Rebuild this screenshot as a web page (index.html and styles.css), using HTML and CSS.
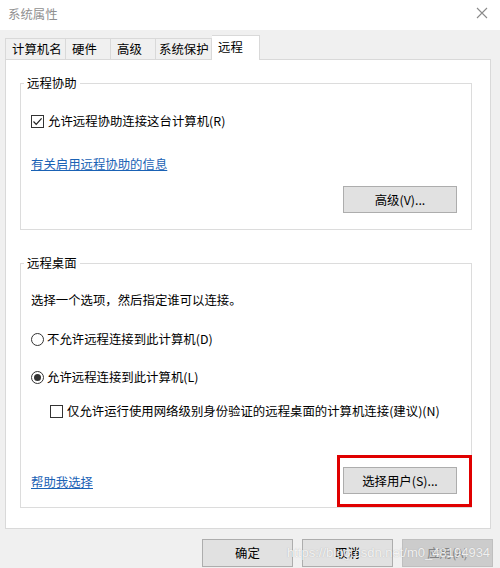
FILE: index.html
```html
<!DOCTYPE html>
<html lang="zh-CN">
<head>
    <meta charset="UTF-8">
    <meta name="viewport" content="width=device-width, initial-scale=1.0">
    <title>系统属性</title>
    <link rel="stylesheet" href="styles.css">
</head>
<body>
    <div class="window">
        <div class="titlebar">
            <span class="title">系统属性</span>
            <svg class="close" width="12" height="12" viewBox="0 0 12 12">
                <path d="M1 1L11 11M11 1L1 11" stroke="#8a8a8a" stroke-width="1.1" fill="none"/>
            </svg>
        </div>

        <div class="tabs">
            <div class="tab tab-name">计算机名</div>
            <div class="tab tab-hw">硬件</div>
            <div class="tab tab-adv">高级</div>
            <div class="tab tab-prot">系统保护</div>
            <div class="tab active">远程</div>
        </div>

        <div class="panel">
            <fieldset class="group group-assist">
                <legend>远程协助</legend>
                <label class="option">
                    <span class="checkbox">
                        <svg width="11" height="11" viewBox="0 0 11 11">
                            <path d="M1.5 5.5L4.2 8.3L9.6 2.3" stroke="#222" stroke-width="1.2" fill="none"/>
                        </svg>
                    </span>
                    允许远程协助连接这台计算机(R)
                </label>
                <a class="link link-info" href="#">有关启用远程协助的信息</a>
                <div class="actions">
                    <button class="btn">高级(V)...</button>
                </div>
            </fieldset>

            <fieldset class="group group-desktop">
                <legend>远程桌面</legend>
                <p class="intro">选择一个选项，然后指定谁可以连接。</p>
                <label class="option radio-row first">
                    <span class="radio"></span>
                    不允许远程连接到此计算机(D)
                </label>
                <label class="option radio-row">
                    <span class="radio checked"></span>
                    允许远程连接到此计算机(L)
                </label>
                <label class="option sub-option">
                    <span class="checkbox"></span>
                    仅允许运行使用网络级别身份验证的远程桌面的计算机连接(建议)(N)
                </label>
                <div class="bottom-row">
                    <a class="link" href="#">帮助我选择</a>
                    <div class="highlight">
                        <button class="btn">选择用户(S)...</button>
                    </div>
                </div>
            </fieldset>
        </div>

        <div class="footer">
            <button class="btn btn-footer">确定</button>
            <button class="btn btn-footer">取消</button>
            <button class="btn btn-footer" disabled>应用(A)</button>
        </div>

        <div class="watermark">https://blog.csdn.net/m0_48194934</div>
    </div>
</body>
</html>
```

FILE: styles.css
```css
body {
    margin: 0;
    font-family: "Noto Sans CJK SC", "Liberation Sans", sans-serif;
    font-size: 12.4px;
    line-height: 16px;
    color: #000;
    background-color: #f0f0f0;
}
.window {
    position: relative;
    width: 500px;
    height: 568px;
    overflow: hidden;
    background-color: #f0f0f0;
}
.titlebar {
    height: 30px;
    background-color: #fff;
    display: flex;
    align-items: center;
    justify-content: space-between;
    padding: 0 12px 0 8px;
    box-sizing: border-box;
}
.title {
    color: #8f8f8f;
    margin-top: -2px;
}
.close {
    margin-top: -4px;
}
.tabs {
    display: flex;
    align-items: flex-end;
    height: 29px;
    padding-left: 5px;
    box-sizing: border-box;
}
.tab {
    height: 21px;
    line-height: 20px;
    padding-left: 6px;
    box-sizing: border-box;
    white-space: nowrap;
    overflow: hidden;
    border: 1px solid #d9d9d9;
    border-bottom: none;
    border-right: none;
    background-color: #f0f0f0;
}
.tab-name { width: 60px; }
.tab-hw { width: 45px; }
.tab-adv { width: 45px; }
.tab-prot {
    width: 57px;
    padding-left: 3px;
    border-right: 1px solid #d9d9d9;
}
.tab.active {
    width: 48px;
    height: 25px;
    line-height: 22px;
    background-color: #fff;
    border: 1px solid #d9d9d9;
    border-bottom: none;
    border-left: none;
    margin-bottom: -1px;
    position: relative;
    z-index: 1;
}
.panel {
    margin: 0 9px 0 5px;
    height: 470px;
    box-sizing: border-box;
    background-color: #fff;
    border: 1px solid #d9d9d9;
    padding: 15px 0 0 14px;
}
.group {
    width: 452px;
    margin: 0;
    padding: 0 14px 0 10px;
    box-sizing: border-box;
    border: 1px solid #dcdcdc;
    min-inline-size: 0;
}
.group legend {
    padding: 0 3px;
    margin-left: -7px;
    line-height: 16px;
}
.group-assist {
    height: 155px;
    padding-top: 22px;
}
.group-desktop {
    margin-top: 25px;
    height: 253px;
    padding-top: 21px;
}
.option {
    display: flex;
    align-items: center;
    height: 16px;
}
.checkbox {
    width: 13px;
    height: 13px;
    box-sizing: border-box;
    border: 1px solid #333;
    background-color: #fff;
    margin-right: 4px;
    display: flex;
    align-items: center;
    justify-content: center;
}
.radio {
    width: 13px;
    height: 13px;
    box-sizing: border-box;
    border: 1px solid #333;
    border-radius: 50%;
    margin-right: 3px;
    display: flex;
    align-items: center;
    justify-content: center;
}
.radio.checked::after {
    content: "";
    width: 7px;
    height: 7px;
    border-radius: 50%;
    background-color: #333;
}
.link {
    display: inline-block;
    color: #1a62b5;
    text-decoration: underline;
}
.link-info {
    margin-top: 27px;
}
.actions {
    display: flex;
    justify-content: flex-end;
    margin-top: 14px;
}
.btn {
    font-family: "Noto Sans CJK SC", "Liberation Sans", sans-serif;
    font-size: 12.4px;
    color: #000;
    width: 114px;
    height: 27px;
    padding: 0;
    background-color: #e1e1e1;
    border: 1px solid #adadad;
    border-radius: 0;
}
.intro {
    margin: 0;
}
.radio-row {
    margin-top: 22px;
}
.radio-row.first {
    margin-top: 23px;
}
.sub-option {
    margin-top: 18px;
    padding-left: 19px;
}
.bottom-row {
    display: flex;
    justify-content: space-between;
    align-items: center;
    margin-top: 48px;
}
.bottom-row .link {
    margin-top: 3px;
}
.highlight {
    position: relative;
}
.highlight::after {
    content: "";
    position: absolute;
    left: -6px;
    right: -15px;
    top: -12px;
    bottom: -13px;
    border: 3px solid #e00000;
}
.footer {
    display: flex;
    justify-content: flex-end;
    gap: 9px;
    padding: 10px 7px 0 0;
}
.btn-footer {
    width: 91px;
    height: 28px;
}
.btn-footer:disabled {
    background-color: #cccccc;
    border-color: #bfbfbf;
    color: #838383;
}
.watermark {
    position: absolute;
    left: 287px;
    top: 544px;
    font-family: "Liberation Sans", sans-serif;
    font-size: 13px;
    line-height: 18px;
    color: rgba(255, 255, 255, 0.85);
    text-shadow: 0 0 1px rgba(120, 120, 120, 0.5);
}
```
